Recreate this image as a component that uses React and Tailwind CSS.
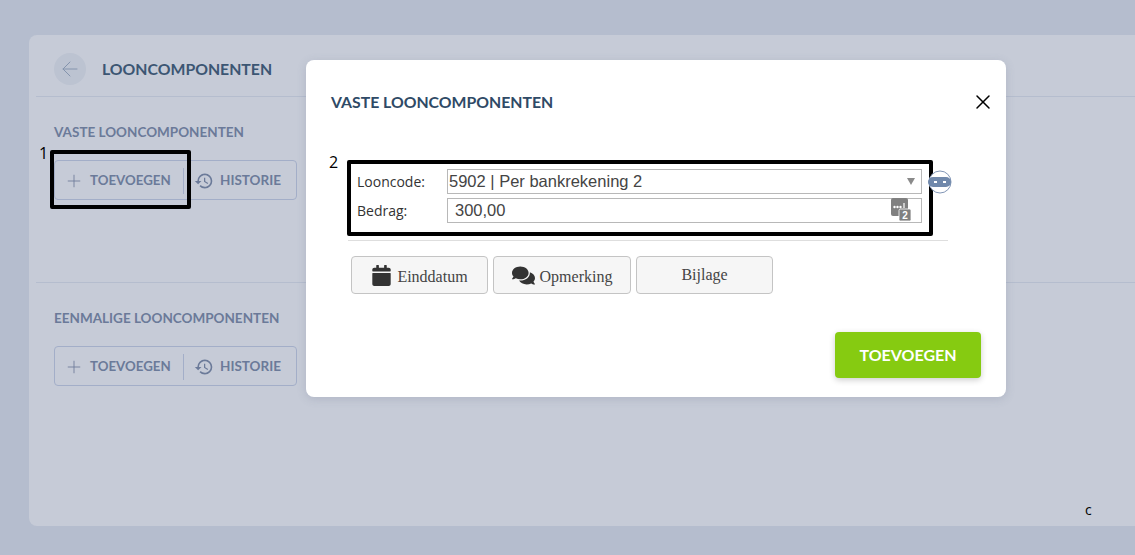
import { ArrowLeft, Plus, X } from 'lucide-react';
import { FaCalendar, FaComments } from 'react-icons/fa';
import { MdHistory } from 'react-icons/md';

const sans = "font-['Lato','Noto_Sans',sans-serif]";

function ActionButtons() {
  return (
    <div className="flex h-10 w-[243px] items-center rounded border border-[#a3aec8] pt-px text-[#6b7a99]">
      <div className="flex h-[26px] w-[129px] items-center gap-[6px] border-r border-[#a3aec8] pl-[9px]">
        <Plus size={20} strokeWidth={1} />
        <span className="text-[13.3px] font-bold">TOEVOEGEN</span>
      </div>
      <div className="flex items-center gap-[6px] pl-[10px]">
        <MdHistory size={20} />
        <span className="text-[13.5px] font-bold">HISTORIE</span>
      </div>
    </div>
  );
}

function FooterButton({ icon, label, width }) {
  return (
    <button className={`flex h-[38px] ${width} items-center justify-center gap-[5px] rounded border border-[#c4c4c4] bg-[#f6f6f6] font-['Liberation_Serif',serif] text-[16px] text-[#444]`}>
      {icon}
      <span className={icon ? 'mt-[3px]' : ''}>{label}</span>
    </button>
  );
}

function CalcIcon() {
  return (
    <svg width="22" height="24" viewBox="0 0 22 24">
      <rect x="0" y="0" width="17" height="18" rx="2" fill="#808080" />
      <circle cx="3.5" cy="9" r="1.2" fill="#fff" />
      <circle cx="6.5" cy="9" r="1.2" fill="#fff" />
      <circle cx="9.5" cy="9" r="1.2" fill="#fff" />
      <path d="M13 10V5" stroke="#fff" strokeWidth="1.2" />
      <rect x="8" y="11" width="12" height="12" rx="1.5" fill="#808080" stroke="#fff" strokeWidth="0.8" />
      <text x="14" y="21" textAnchor="middle" fontSize="10" fontWeight="700" fill="#fff" fontFamily="Liberation Sans">2</text>
    </svg>
  );
}

function LinkIcon() {
  return (
    <svg width="24" height="24" viewBox="0 0 24 24">
      <circle cx="12" cy="12" r="11" fill="#fff" stroke="#8296b6" strokeWidth="1" />
      <rect x="0" y="7" width="23" height="10" rx="5" fill="#7088ab" />
      <rect x="6" y="11" width="3" height="2" fill="#fff" />
      <rect x="15" y="11" width="3" height="2" fill="#fff" />
    </svg>
  );
}

export default function App() {
  return (
    <div className={`relative h-[555px] w-[1135px] overflow-hidden bg-[#b5bdce] pt-[35px] pl-[29px] ${sans}`}>
      <div className="h-[491px] rounded-l-lg bg-[#c6cbd7] pl-[7px]">
        <div className="flex h-[62px] items-center gap-[16px] border-b border-[#b5bdce] pt-[6px] pl-[18px]">
          <div className="flex h-8 w-8 items-center justify-center rounded-full bg-[#bcc3d1] text-[#8494ad]">
            <ArrowLeft size={24} strokeWidth={1} />
          </div>
          <h1 className="text-[15.8px] font-bold text-[#3c5673]">LOONCOMPONENTEN</h1>
        </div>
        <section className="h-[186px] border-b border-[#b5bdce] pt-[26px] pl-[18px]">
          <h2 className="mb-[19px] text-[13.5px] leading-[18px] font-bold text-[#6b7a99]">VASTE LOONCOMPONENTEN</h2>
          <ActionButtons />
        </section>
        <section className="pt-[26px] pl-[18px]">
          <h2 className="mb-[19px] text-[13.5px] leading-[18px] font-bold text-[#6b7a99]">EENMALIGE LOONCOMPONENTEN</h2>
          <ActionButtons />
        </section>
      </div>

      <div className="absolute top-[60px] left-[306px] h-[337px] w-[700px] rounded-lg bg-white shadow-[0_2px_10px_rgba(90,100,130,0.2)]">
        <div className="flex h-[84px] items-center justify-between pr-[11px] pl-[25px]">
          <h2 className="text-[15.8px] font-bold text-[#2f4a66]">VASTE LOONCOMPONENTEN</h2>
          <X size={24} strokeWidth={1.5} className="text-black" />
        </div>

        <div className="mt-[16px] ml-[41px] flex w-[610px] items-start">
          <div className="h-[76px] w-[586px] shrink-0 rounded-[2px] border-4 border-black pt-[5px] pr-[7px] pl-[6px]">
            <div className="flex h-[25px] items-center">
              <label className="w-[90px] font-['Open_Sans',sans-serif] text-[14px] text-[#333]">Looncode:</label>
              <div className="flex h-[25px] flex-1 items-center justify-between border border-[#b8b8b8] pr-[5px] pl-[1px] font-['Liberation_Sans',sans-serif] text-[16.5px] text-[#444]">
                5902 | Per bankrekening 2
                <span className="mr-[1px] h-0 w-0 border-x-[4px] border-t-[7px] border-x-transparent border-t-[#8a8a8a]" />
              </div>
            </div>
            <div className="mt-[4px] flex h-[25px] items-center">
              <label className="w-[90px] font-['Open_Sans',sans-serif] text-[14px] text-[#333]">Bedrag:</label>
              <div className="flex h-[25px] flex-1 items-center justify-between border border-[#b8b8b8] pr-[8px] pl-[7px] font-['Liberation_Sans',sans-serif] text-[16.5px] text-[#444]">
                300,00
                <span className="mb-[1px] flex h-[24px] items-center"><CalcIcon /></span>
              </div>
            </div>
          </div>
          <span className="mt-[10px] -ml-[5px] shrink-0"><LinkIcon /></span>
        </div>

        <div className="mt-[4px] ml-[42px] h-px w-[600px] bg-[#dedede]" />

        <div className="mt-[15px] ml-[45px] flex gap-[5px]">
          <FooterButton width="w-[137px]" label="Einddatum" icon={<FaCalendar size={21} className="text-[#333]" />} />
          <FooterButton width="w-[138px]" label="Opmerking" icon={<FaComments size={23} className="text-[#333]" />} />
          <FooterButton width="w-[137px]" label="Bijlage" />
        </div>

        <div className="mt-[38px] flex justify-end pr-[25px]">
          <button className="h-[46px] w-[146px] rounded bg-[#86cb11] pb-[1px] text-[16px] font-bold text-white shadow-[0_2px_6px_rgba(0,0,0,0.2)]">
            TOEVOEGEN
          </button>
        </div>
      </div>

      {/* annotations on top of the screenshot */}
      <div className="absolute top-[150px] left-[50px] h-[59px] w-[141px] rounded-[2px] border-4 border-black" />
      <span className="absolute top-[141px] left-[39px] font-['Open_Sans',sans-serif] text-[16px] text-black">1</span>
      <span className="absolute top-[150px] left-[329px] font-['Open_Sans',sans-serif] text-[16px] text-black">2</span>
      <span className="absolute top-[499px] left-[1085px] font-['Open_Sans',sans-serif] text-[14px] text-black">c</span>
    </div>
  );
}
